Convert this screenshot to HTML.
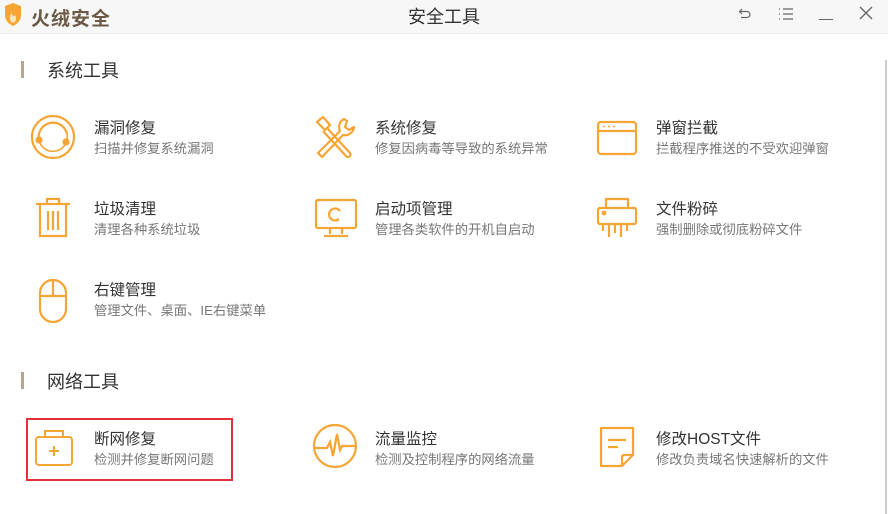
<!DOCTYPE html>
<html><head><meta charset="utf-8"><style>
*{margin:0;padding:0;box-sizing:border-box}
body{width:888px;height:514px;overflow:hidden;background:#fff;font-family:"Liberation Sans","Noto Sans CJK SC",sans-serif;position:relative}
.bar{position:absolute;left:0;top:0;width:888px;height:34px;background:#f7f7f7;border-bottom:1px solid #ececec}
.logo{position:absolute;left:31px;top:4px;font-size:19px;font-weight:bold;color:#6b5a45;letter-spacing:1px}
.title{position:absolute;left:0;width:888px;top:3px;text-align:center;font-size:18px;color:#333}
.sec{position:absolute;left:21px;font-size:18px;color:#333}
.sec:before{content:"";position:absolute;left:0;top:4px;width:3px;height:17px;background:#b8a58f}
.sec span{margin-left:26px}
.item{position:absolute}
.item .t{position:absolute;left:0;top:0;font-size:15.5px;color:#333;white-space:nowrap}
.item .s{position:absolute;left:0;top:22px;font-size:13.3px;color:#777;white-space:nowrap}
svg.ic{position:absolute}
</style></head><body>
<div class="bar">
<svg style="position:absolute;left:3px;top:3px" width="20" height="24" viewBox="0 0 20 24"><path d="M2 3 L10 0 L18 3 V12 C18 18 14 21 10 23 C6 21 2 18 2 12Z" fill="#f5a534"/><path d="M10 20 C6 18 6 13 9 10 C9 13 11 14 12 12 C14 15 13 19 10 20Z" fill="#fbe3bd"/></svg>
<div class="logo">火绒安全</div>
<div class="title">安全工具</div>
<svg style="position:absolute;left:738px;top:7px" width="14" height="14" viewBox="0 0 14 14" fill="none" stroke="#666" stroke-width="1.2"><path d="M4 2 L1.5 4.5 L4 7"/><path d="M1.5 4.5 H9 A3 3 0 0 1 9 10.5 H3"/></svg>
<svg style="position:absolute;left:778px;top:7px" width="16" height="14" viewBox="0 0 16 14" stroke="#666" stroke-width="1.2"><path d="M1 2h1M1 7h1M1 12h1M5 2h10M5 7h10M5 12h10"/></svg>
<div style="position:absolute;left:819px;top:19px;width:14px;height:1.3px;background:#666"></div>
<svg style="position:absolute;left:859px;top:6px" width="14" height="14" viewBox="0 0 14 14" stroke="#666" stroke-width="1.3"><path d="M1 1L13 13M13 1L1 13"/></svg>
</div>
<div style="position:absolute;left:885px;top:60px;width:2px;height:454px;background:#ccc"></div>

<div class="sec" style="top:57px"><span>系统工具</span></div>
<div class="sec" style="top:368px"><span>网络工具</span></div>

<svg class="ic" style="left:30px;top:114px" width="46" height="46" viewBox="0 0 46 46" fill="none" stroke="#f5a534" stroke-width="2.2"><circle cx="23" cy="23" r="21"/><path d="M9 26 A14 14 0 0 1 37 20"/><path d="M37 20 A14 14 0 0 1 9 26" stroke-width="1.6"/><circle cx="9" cy="26" r="2.5" fill="#f5a534"/><circle cx="36" cy="28" r="2.5" fill="#f5a534"/></svg>
<svg class="ic" style="left:314px;top:115px" width="42" height="44" viewBox="0 0 42 44" fill="none" stroke="#f5a534" stroke-width="2.2" stroke-linejoin="round"><path d="M3 7 L9 2 L16 10 L11 15Z"/><path d="M13 13 L36 38 A2.5 2.5 0 0 1 32 41 L9 16"/><path d="M30 4 A9 9 0 0 0 26 16 L4 38 L8 42 L29 20 A9 9 0 0 0 40 12 L35 15 L31 12 L33 6 Z"/></svg>
<svg class="ic" style="left:596px;top:120px" width="42" height="36" viewBox="0 0 42 36" fill="none" stroke="#f5a534" stroke-width="2.2"><rect x="2" y="2" width="38" height="32" rx="3"/><path d="M2 11H40"/><path d="M7 6.5h2M12 6.5h2M17 6.5h2" stroke-width="1.6"/></svg>

<svg class="ic" style="left:34px;top:196px" width="38" height="44" viewBox="0 0 38 44" fill="none" stroke="#f5a534" stroke-width="2.2"><path d="M2 8H36M13 8V3H25V8"/><path d="M6 8V40H32V8"/><path d="M14 15V34M19 15V34M24 15V34"/></svg>
<svg class="ic" style="left:314px;top:198px" width="44" height="42" viewBox="0 0 44 42" fill="none" stroke="#f5a534" stroke-width="2.2"><rect x="2" y="2" width="40" height="28" rx="2"/><path d="M16 30V36M28 30V36M10 38H34"/><path d="M26 13 A6 6 0 1 0 25 21"/></svg>
<svg class="ic" style="left:596px;top:196px" width="42" height="44" viewBox="0 0 42 44" fill="none" stroke="#f5a534" stroke-width="2.2"><path d="M10 12V3H32V12"/><rect x="2" y="12" width="38" height="16" rx="2"/><path d="M7 28V35M13 28V41M19 28V37M25 28V41M31 28V35"/><circle cx="8" cy="17" r="1.3" fill="#f5a534"/></svg>

<svg class="ic" style="left:38px;top:278px" width="30" height="46" viewBox="0 0 30 46" fill="none" stroke="#f5a534" stroke-width="2.2"><rect x="2" y="2" width="26" height="42" rx="13"/><path d="M2 18H28M15 2V18"/></svg>

<svg class="ic" style="left:34px;top:427px" width="40" height="40" viewBox="0 0 40 40" fill="none" stroke="#f5a534" stroke-width="2"><path d="M11 10V4H29V10"/><rect x="2" y="10" width="36" height="28" rx="3"/><path d="M20 19V29M15 24H25"/></svg>
<svg class="ic" style="left:311px;top:422px" width="48" height="48" viewBox="0 0 48 48" fill="none" stroke="#f5a534" stroke-width="2.2"><circle cx="24" cy="24" r="21"/><path d="M3 26H16L19 20L22 34L26 12L29 28L31 24H45"/></svg>
<svg class="ic" style="left:598px;top:425px" width="38" height="44" viewBox="0 0 38 44" fill="none" stroke="#f5a534" stroke-width="2.2" stroke-linejoin="round"><path d="M3 3H35V30L24 41H3Z"/><path d="M35 30H26A2 2 0 0 0 24 32V41"/><path d="M10 15H28M10 22H20"/></svg>

<div class="item" style="left:94px;top:116px"><div class="t">漏洞修复</div><div class="s">扫描并修复系统漏洞</div></div>
<div class="item" style="left:375px;top:116px"><div class="t">系统修复</div><div class="s">修复因病毒等导致的系统异常</div></div>
<div class="item" style="left:656px;top:116px"><div class="t">弹窗拦截</div><div class="s">拦截程序推送的不受欢迎弹窗</div></div>
<div class="item" style="left:94px;top:197px"><div class="t">垃圾清理</div><div class="s">清理各种系统垃圾</div></div>
<div class="item" style="left:375px;top:197px"><div class="t">启动项管理</div><div class="s">管理各类软件的开机自启动</div></div>
<div class="item" style="left:656px;top:197px"><div class="t">文件粉碎</div><div class="s">强制删除或彻底粉碎文件</div></div>
<div class="item" style="left:94px;top:278px"><div class="t">右键管理</div><div class="s">管理文件、桌面、IE右键菜单</div></div>
<div class="item" style="left:94px;top:427px"><div class="t">断网修复</div><div class="s">检测并修复断网问题</div></div>
<div class="item" style="left:375px;top:427px"><div class="t">流量监控</div><div class="s">检测及控制程序的网络流量</div></div>
<div class="item" style="left:656px;top:427px"><div class="t">修改HOST文件</div><div class="s">修改负责域名快速解析的文件</div></div>

<div style="position:absolute;left:26px;top:418px;width:207px;height:63px;border:2px solid #e5303a"></div>
</body></html>
